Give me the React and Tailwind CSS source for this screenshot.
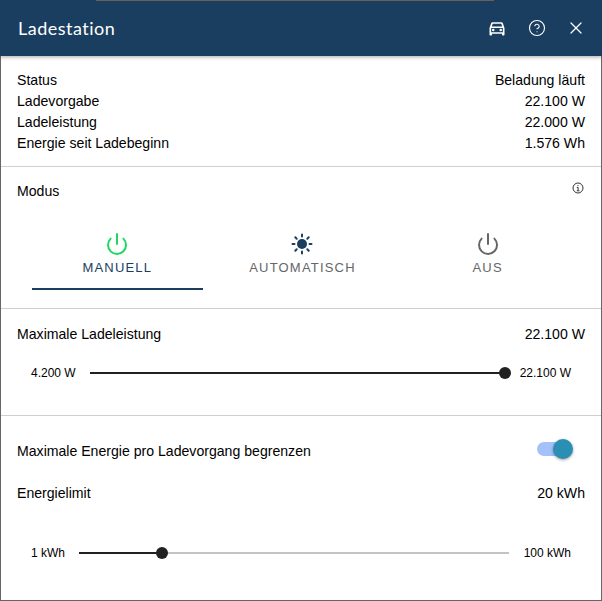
import React from "react";
import { CircleHelp, Power, X } from "lucide-react";

const rows = [
  ["Status", "Beladung läuft"],
  ["Ladevorgabe", "22.100 W"],
  ["Ladeleistung", "22.000 W"],
  ["Energie seit Ladebeginn", "1.576 Wh"],
];

const CarIcon = () => (
  <svg width="20" height="20" viewBox="0 0 24 24" fill="currentColor" className="-mr-px">
    <path d="M18.92 6.01C18.72 5.42 18.16 5 17.5 5h-11c-.66 0-1.21.42-1.42 1.01L3 12v8c0 .55.45 1 1 1h1c.55 0 1-.45 1-1v-1h12v1c0 .55.45 1 1 1h1c.55 0 1-.45 1-1v-8l-2.08-5.99zM6.85 7h10.29l1.08 3.11H5.77L6.85 7zM19 17H5v-5h14v5z" />
    <circle cx="7.5" cy="14.5" r="1.5" />
    <circle cx="16.5" cy="14.5" r="1.5" />
  </svg>
);

const SunIcon = () => (
  <svg width="24" height="24" viewBox="0 0 24 24" className="text-[#1a3e5f]" fill="none" stroke="currentColor" strokeWidth="2" strokeLinecap="round">
    <circle cx="12" cy="12" r="5" fill="currentColor" stroke="none" />
    <path d="M12 2.5v2M12 19.5v2M2.5 12h2M19.5 12h2M5.3 5.3l1.4 1.4M17.3 17.3l1.4 1.4M5.3 18.7l1.4-1.4M17.3 6.7l1.4-1.4" />
  </svg>
);

const InfoIcon = () => (
  <svg width="12" height="12" viewBox="0 0 12 12" fill="none" stroke="#333" strokeWidth="1">
    <circle cx="6" cy="6" r="5" />
    <path d="M4.8 5.4H6.1V8.6M4.8 8.8H7.4M6 3.1v1" />
  </svg>
);

const Slider = ({ min, max, percent, trackWidth, labelWidth }) => (
  <div className="flex items-center pl-[30px] pr-[30px] text-xs text-black">
    <span className={labelWidth}>{min}</span>
    <div className={`${trackWidth} flex items-center`}>
      <div className="h-0.5 bg-[#212121]" style={{ width: `${percent}%` }} />
      <div className="w-3 h-3 rounded-full bg-[#212121] -mx-1.5 z-10 shrink-0" />
      <div className="h-0.5 flex-1 bg-[#c4c4c4]" />
    </div>
    <span className="ml-auto">{max}</span>
  </div>
);

const Tab = ({ icon, label, active }) => (
  <div className={`flex flex-col items-center h-[58px] ${active ? "border-b-2 border-[#1a3e5f]" : ""}`}>
    <div className="h-6 flex items-center justify-center">{icon}</div>
    <span className={`mt-0.5 text-[13px] leading-5 tracking-[1.2px] ${active ? "text-[#1a3e5f]" : "text-[#666666]"}`}>
      {label}
    </span>
  </div>
);

export default function App() {
  return (
    <div className="relative w-[602px] h-[601px] overflow-hidden bg-white text-[14.1px] leading-[21px] text-black font-['Liberation_Sans',Arial,sans-serif]">
      <div className="absolute left-[96px] top-0 w-[398px] h-px bg-[#6b6058] z-20" />
      <header className="relative z-10 h-14 bg-[#1a3e5f] text-white flex items-center pl-[18px] pr-[18px] shadow-[0_1px_4px_rgba(0,0,0,0.35)]">
        <h1 className="flex-1 text-lg font-normal font-['Lato',sans-serif] tracking-[0.5px]">Ladestation</h1>
        <div className="flex items-center gap-[22px]">
          <CarIcon />
          <CircleHelp size={18} strokeWidth={1.5} />
          <X size={20} strokeWidth={1.5} className="-mx-0.5" />
        </div>
      </header>

      <main className="h-[545px] border-x border-b border-[#666666]">
        <section className="pt-[14px] pb-[12px] pl-4 pr-4 border-b border-[#cfcfcf]">
          {rows.map(([name, value]) => (
            <div key={name} className="flex justify-between">
              <span>{name}</span>
              <span>{value}</span>
            </div>
          ))}
        </section>

        <section className="h-[142px] pt-[14px] border-b border-[#cfcfcf]">
          <div className="flex justify-between pl-4 pr-[17px]">
            <span>Modus</span>
            <span className="pt-px">
              <InfoIcon />
            </span>
          </div>
          <div className="grid grid-cols-3 gap-[14.5px] pl-[31px] pr-[28px] mt-[30px]">
            <Tab active label="MANUELL" icon={<Power size={24} strokeWidth={2} className="text-[#1ed760]" />} />
            <Tab label="AUTOMATISCH" icon={<SunIcon />} />
            <Tab label="AUS" icon={<Power size={24} strokeWidth={2} className="text-[#666666]" />} />
          </div>
        </section>

        <section className="h-[107px] pt-[15px] border-b border-[#cfcfcf]">
          <div className="flex justify-between pl-4 pr-4 mb-5">
            <span>Maximale Ladeleistung</span>
            <span>22.100 W</span>
          </div>
          <Slider min="4.200 W" max="22.100 W" percent={100} trackWidth="w-[415px]" labelWidth="w-[59px]" />
        </section>

        <section className="pt-6">
          <div className="flex items-center justify-between pl-4 pr-[31px] h-5">
            <span className="translate-y-px">Maximale Energie pro Ladevorgang begrenzen</span>
            <div className="relative w-[33px] h-[14px] rounded-full bg-[#a4c2f9] -translate-y-px">
              <div className="absolute right-[-3px] top-[-3px] w-5 h-5 rounded-full bg-[#2b8fb3] shadow-[0_1px_3px_rgba(0,0,0,0.4)]" />
            </div>
          </div>
          <div className="flex justify-between pl-4 pr-4 mt-[23px] mb-[41px]">
            <span>Energielimit</span>
            <span>20 kWh</span>
          </div>
          <Slider min="1 kWh" max="100 kWh" percent={19.3} trackWidth="w-[430px]" labelWidth="w-[48px]" />
        </section>
      </main>
    </div>
  );
}
